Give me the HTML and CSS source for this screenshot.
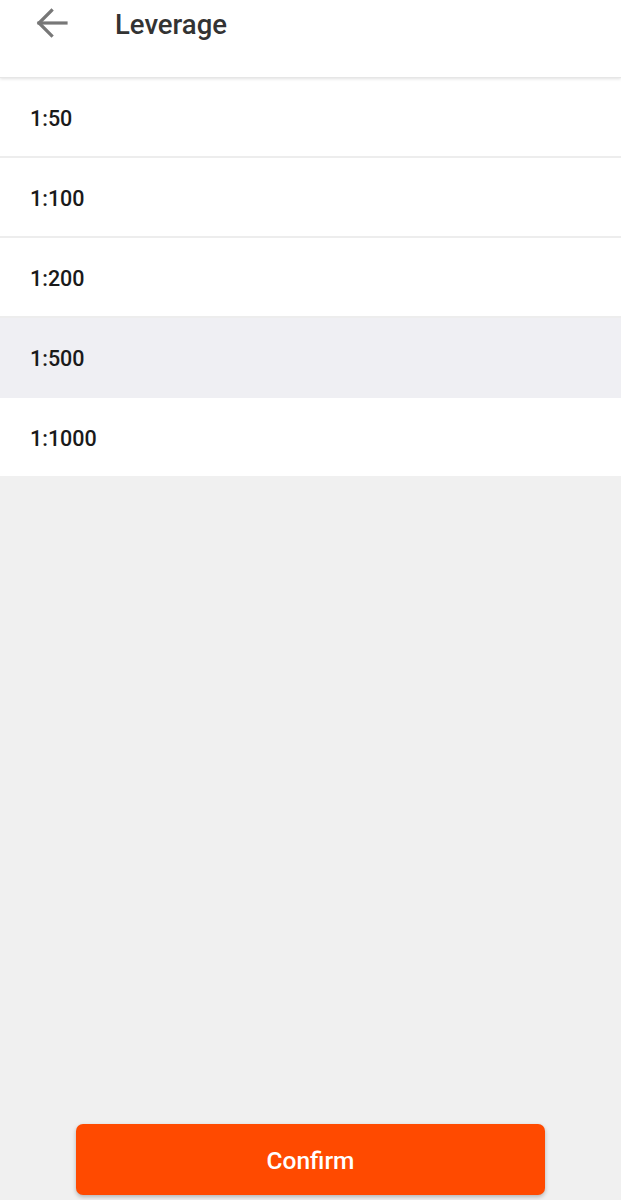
FILE: index.html
```html
<!DOCTYPE html>
<html lang="en">
<head>
<meta charset="utf-8">
<title>Leverage</title>
<link rel="stylesheet" href="styles.css">
</head>
<body>
<div class="page">
  <header class="topbar">
    <button class="back" aria-label="Back">
      <svg width="32" height="30" viewBox="0 0 32 30" fill="none" stroke="#777" stroke-width="3.2" stroke-linecap="square" stroke-linejoin="miter">
        <path d="M3 15 H30"/>
        <path d="M15.5 2.5 L3 15 L15.5 27.5"/>
      </svg>
    </button>
    <h1 class="title">Leverage</h1>
  </header>
  <ul class="options">
    <li class="option">1:50</li>
    <li class="option">1:100</li>
    <li class="option">1:200</li>
    <li class="option selected">1:500</li>
    <li class="option">1:1000</li>
  </ul>
  <div class="spacer"></div>
  <div class="footer">
    <button class="confirm">Confirm</button>
  </div>
</div>
</body>
</html>
```
FILE: styles.css
```css
html, body {
  margin: 0;
  padding: 0;
}
body {
  background: #f0f0f0;
  font-family: Roboto, "Liberation Sans", sans-serif;
}
.page {
  display: flex;
  flex-direction: column;
  min-height: 100vh;
}
.topbar {
  position: relative;
  z-index: 1;
  height: 77px;
  background: #fff;
  display: flex;
  align-items: flex-start;
  box-shadow: 0 1px 3px rgba(0,0,0,0.12);
  border-bottom: 1px solid #e6e6e6;
}
.back {
  margin: 8px 0 0 36px;
  padding: 0;
  border: 0;
  background: none;
  width: 34px;
  height: 30px;
  display: flex;
}
.title {
  margin: 8px 0 0 45px;
  font-size: 27.5px;
  line-height: 34px;
  font-weight: 500;
  color: #333;
}
.options {
  list-style: none;
  margin: 0;
  padding: 0;
}
.option {
  height: 78px;
  display: flex;
  align-items: center;
  padding-left: 30px;
  padding-top: 2px;
  box-sizing: border-box;
  height: 80px;
  background: #fff;
  border-bottom: 2px solid #ededed;
  font-size: 21.5px;
  font-weight: 500;
  color: #1a1a1a;
}
.option:last-child {
  border-bottom: 0;
  height: 78px;
}
.option.selected {
  background: #efeff3;
  border-bottom-color: #efeff3;
}
.spacer {
  flex: 1;
}
.footer {
  padding: 0 76px 5px;
}
.confirm {
  width: 100%;
  height: 71px;
  padding-top: 3px;
  border: 0;
  border-radius: 7px;
  background: #ff4a00;
  color: #fff;
  font-family: Roboto, "Liberation Sans", sans-serif;
  font-size: 24.5px;
  font-weight: 500;
  box-shadow: 0 2px 4px rgba(0,0,0,0.25);
  display: block;
}
```
